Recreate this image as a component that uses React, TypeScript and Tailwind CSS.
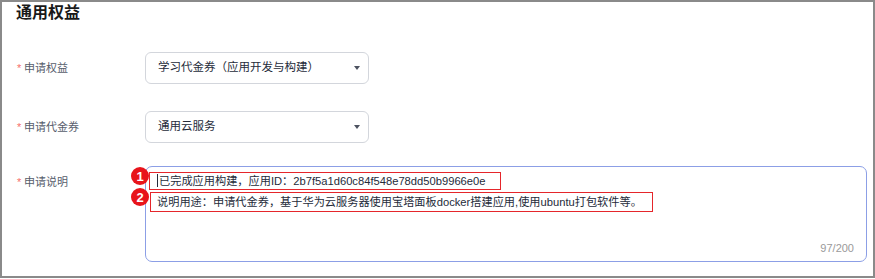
import { useState } from 'react';

const font = 'font-["Liberation_Sans","Noto_Sans_CJK_SC",sans-serif]';

function Label({ text }: { text: string }) {
  return (
    <div className="w-[129px] shrink-0 flex items-center text-[11px] text-[#575d6c]">
      <span className="text-[#f66f6a] w-[8px] pl-[1px]">*</span>
      <span>{text}</span>
    </div>
  );
}

function Select({ value }: { value: string }) {
  return (
    <div className="w-[224px] h-[32px] border border-[#d3d6dc] rounded-[6px] flex items-center justify-between pl-[12px] pr-[8px] text-[11.5px] text-[#252b3a]">
      <span>{value}</span>
      <svg width="6" height="4" viewBox="0 0 6 4">
        <path d="M0 0 L6 0 L3 4 Z" fill="#4d5260" />
      </svg>
    </div>
  );
}

function Marker({ n }: { n: number }) {
  return (
    <div className="w-[18px] h-[18px] rounded-full bg-[#e8141b] text-white text-[13px] font-bold flex items-center justify-center leading-none">
      {n}
    </div>
  );
}

export default function App() {
  const [note] = useState(
    '已完成应用构建，应用ID：2b7f5a1d60c84f548e78dd50b9966e0e\n说明用途：申请代金券，基于华为云服务器使用宝塔面板docker搭建应用,使用ubuntu打包软件等。'
  );

  return (
    <div className={`${font} relative w-[875px] h-[278px] border-2 border-[#8a8a8a] bg-white pl-[14px] pr-[5px] overflow-hidden`}>
      <h2 className="text-[16px] leading-[22px] font-bold text-[#191919]">通用权益</h2>

      {/* 申请权益 */}
      <div className="flex mt-[28px]">
        <Label text="申请权益" />
        <Select value="学习代金券（应用开发与构建）" />
      </div>

      {/* 申请代金券 */}
      <div className="flex mt-[27px]">
        <Label text="申请代金券" />
        <Select value="通用云服务" />
      </div>

      {/* 申请说明 */}
      <div className="flex mt-[23px]">
        <div className="w-[129px] shrink-0 pt-[6px]">
          <div className="flex items-center h-[20px] text-[11px] text-[#575d6c]">
            <span className="text-[#f66f6a] w-[8px] pl-[1px]">*</span>
            <span>申请说明</span>
          </div>
        </div>
        <div className="relative w-[722px] h-[96px] border border-[#8c9fe6] rounded-[7px] pl-[11px] pt-[4px] text-[11.2px] leading-[21px] text-[#252b3a]">
          <div className="whitespace-pre-line">
            <span className="inline-block w-px h-[13px] bg-[#252b3a] align-[-2px] mr-px" />
            {note}
          </div>
          <span className="absolute right-[12px] bottom-[2px] text-[11px] text-[#9a9a9a]">97/200</span>
        </div>
      </div>

      {/* annotation overlays */}
      <div className="absolute left-[147px] top-[170px] w-[352px] h-[18px] border border-[#e5262b]" />
      <div className="absolute left-[148px] top-[190px] w-[503px] h-[20px] border border-[#e5262b]" />
      <div className="absolute left-[129px] top-[165px]">
        <Marker n={1} />
      </div>
      <div className="absolute left-[129px] top-[186px]">
        <Marker n={2} />
      </div>
    </div>
  );
}
